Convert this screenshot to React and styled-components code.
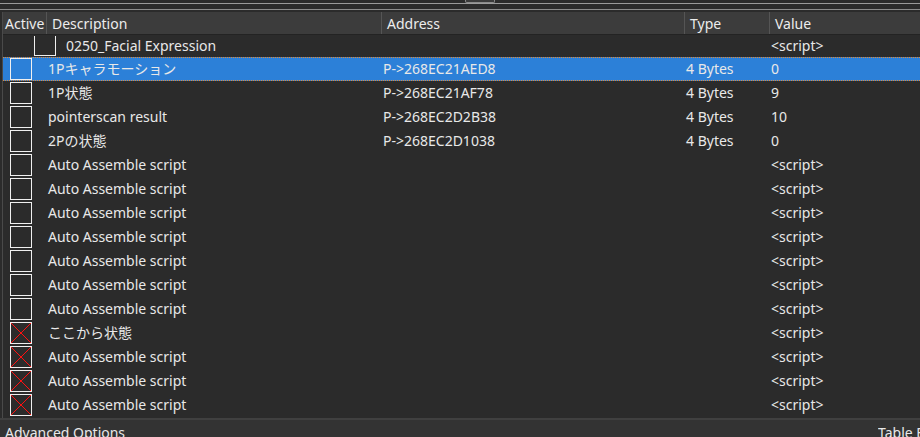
import React from "react"
import styled, { createGlobalStyle } from "styled-components"

const GlobalStyle = createGlobalStyle`
  html, body {
    margin: 0;
    padding: 0;
    background: #2b2b2b;
  }
  body {
    font-family: "Noto Sans", "Noto Sans CJK JP", sans-serif;
    font-size: 14px;
    color: #e8e8e8;
  }
`

const COLS = "47px 335px 303px 85px 1fr"

const rows = [
  { desc: "Auto Assemble script", value: "<script>" },
  { desc: "Auto Assemble script", value: "<script>" },
  { desc: "Auto Assemble script", value: "<script>" },
  { desc: "Auto Assemble script", value: "<script>" },
  { desc: "Auto Assemble script", value: "<script>" },
  { desc: "Auto Assemble script", value: "<script>" },
  { desc: "Auto Assemble script", value: "<script>" },
  { desc: "ここから状態", value: "<script>", cross: true },
  { desc: "Auto Assemble script", value: "<script>", cross: true },
  { desc: "Auto Assemble script", value: "<script>", cross: true },
  { desc: "Auto Assemble script", value: "<script>", cross: true },
]

const dataRows = [
  { desc: "1Pキャラモーション", addr: "P->268EC21AED8", type: "4 Bytes", value: "0", selected: true },
  { desc: "1P状態", addr: "P->268EC21AF78", type: "4 Bytes", value: "9" },
  { desc: "pointerscan result", addr: "P->268EC2D2B38", type: "4 Bytes", value: "10" },
  { desc: "2Pの状態", addr: "P->268EC2D1038", type: "4 Bytes", value: "0" },
]

export default function App() {
  return (
    <Window>
      <GlobalStyle />
      <TopStrip>
        <Splitter />
      </TopStrip>
      <Table>
        <Header>
          <HeadCell>Active</HeadCell>
          <HeadCell>Description</HeadCell>
          <HeadCell>Address</HeadCell>
          <HeadCell>Type</HeadCell>
          <HeadCell>Value</HeadCell>
        </Header>
        <Body>
          <Row $first>
            <CheckCell $indent>
              <Check $cut />
            </CheckCell>
            <Cell $indent $tight>0250_Facial Expression</Cell>
            <Cell />
            <Cell />
            <Cell $tight>&lt;script&gt;</Cell>
          </Row>
          {dataRows.map((r, i) => (
            <Row key={i} $selected={r.selected}>
              <CheckCell>
                <Check $selected={r.selected} />
              </CheckCell>
              <Cell>{r.desc}</Cell>
              <Cell>{r.addr}</Cell>
              <Cell>{r.type}</Cell>
              <Cell>{r.value}</Cell>
            </Row>
          ))}
          {rows.map((r, i) => (
            <Row key={"s" + i}>
              <CheckCell>
                <Check>
                  {r.cross && (
                    <svg width="20" height="20" viewBox="0 0 20 20">
                      <line x1="0" y1="0" x2="20" y2="20" stroke="#ff1010" strokeWidth="1" />
                      <line x1="20" y1="0" x2="0" y2="20" stroke="#ff1010" strokeWidth="1" />
                    </svg>
                  )}
                </Check>
              </CheckCell>
              <Cell>{r.desc}</Cell>
              <Cell />
              <Cell />
              <Cell>{r.value}</Cell>
            </Row>
          ))}
        </Body>
      </Table>
      <Footer>
        <FooterText>Advanced Options</FooterText>
        <FooterText>Table Extras</FooterText>
      </Footer>
    </Window>
  )
}

const Window = styled.div`
  width: 920px;
  height: 437px;
  display: flex;
  flex-direction: column;
  overflow: hidden;
  background: #2b2b2b;
`

const TopStrip = styled.div`
  height: 10px;
  flex: none;
  display: flex;
  justify-content: center;
  border-top: 3px solid #2b2b2b;
  border-bottom: 1px solid #8c8c8c;
  box-sizing: border-box;
  position: relative;
  &::before {
    content: "";
    position: absolute;
    left: 0;
    right: 0;
    top: 0;
    height: 1px;
    background: #9a9a9a;
  }
`

const Splitter = styled.div`
  width: 30px;
  height: 3px;
  margin-top: -3px;
  margin-left: 40px;
  border: 1px solid #8a8a8a;
  border-top: none;
  border-radius: 0 0 2px 2px;
  box-sizing: border-box;
  background: #3a3a3a;
  position: relative;
  z-index: 1;
`

const Table = styled.div`
  flex: 1;
  display: flex;
  flex-direction: column;
  margin-top: 2px;
  margin-left: 2px;
  border-left: 1px solid #4a4a4a;
  overflow: hidden;
  min-height: 0;
`

const Header = styled.div`
  display: grid;
  grid-template-columns: ${COLS};
  height: 23px;
  flex: none;
  background: #3c3c3c;
  border-bottom: 1px solid #232323;
  box-sizing: border-box;
  margin-left: -3px;
`

const HeadCell = styled.div`
  display: flex;
  align-items: center;
  padding-left: 5px;
  padding-top: 1px;
  border-right: 1px solid #555555;
  white-space: nowrap;
  overflow: hidden;
  font-size: 14px;
  color: #ececec;
  &:last-child {
    border-right: none;
  }
`

const Body = styled.div`
  flex: 1;
  display: flex;
  flex-direction: column;
  margin-left: -3px;
`

const Row = styled.div`
  display: grid;
  grid-template-columns: ${COLS};
  height: ${(p) => (p.$first ? "22px" : "24px")};
  flex: none;
  box-sizing: border-box;
  background: ${(p) => (p.$selected ? "#2c80d8" : "transparent")};
  border-top: 1px dotted ${(p) => (p.$selected ? "#e08a3a" : "transparent")};
  border-bottom: 1px dotted ${(p) => (p.$selected ? "#e08a3a" : "transparent")};
  align-items: ${(p) => (p.$first ? "start" : "center")};
`

const CheckCell = styled.div`
  position: relative;
  height: 100%;
  display: flex;
  align-items: ${(p) => (p.$indent ? "flex-start" : "center")};
  padding-left: 10px;
`

const Check = styled.div`
  width: 22px;
  height: ${(p) => (p.$cut ? "20px" : "22px")};
  box-sizing: border-box;
  border: 1px solid #f0f0f0;
  border-top: ${(p) => (p.$cut ? "none" : "1px solid #f0f0f0")};
  background: ${(p) => (p.$selected ? "#2c80d8" : "transparent")};
  flex: none;
  display: flex;
  svg {
    display: block;
  }
  ${(p) => (p.$cut ? "position: absolute; left: 34px; top: 0;" : "")}
`

const Cell = styled.div`
  padding-left: ${(p) => (p.$indent ? "19px" : "1px")};
  white-space: nowrap;
  overflow: visible;
  line-height: ${(p) => (p.$tight ? "20px" : "22px")};
`

const Footer = styled.div`
  height: 19px;
  flex: none;
  display: flex;
  justify-content: space-between;
  background: #333333;
  border-top: 2px solid #404040;
  box-sizing: border-box;
  padding: 0 0 0 5px;
  overflow: hidden;
`

const FooterText = styled.div`
  font-size: 14px;
  line-height: 16px;
  padding-top: 5px;
  white-space: nowrap;
  color: #e8e8e8;
  &:last-child {
    width: 42px;
    overflow: hidden;
  }
`
